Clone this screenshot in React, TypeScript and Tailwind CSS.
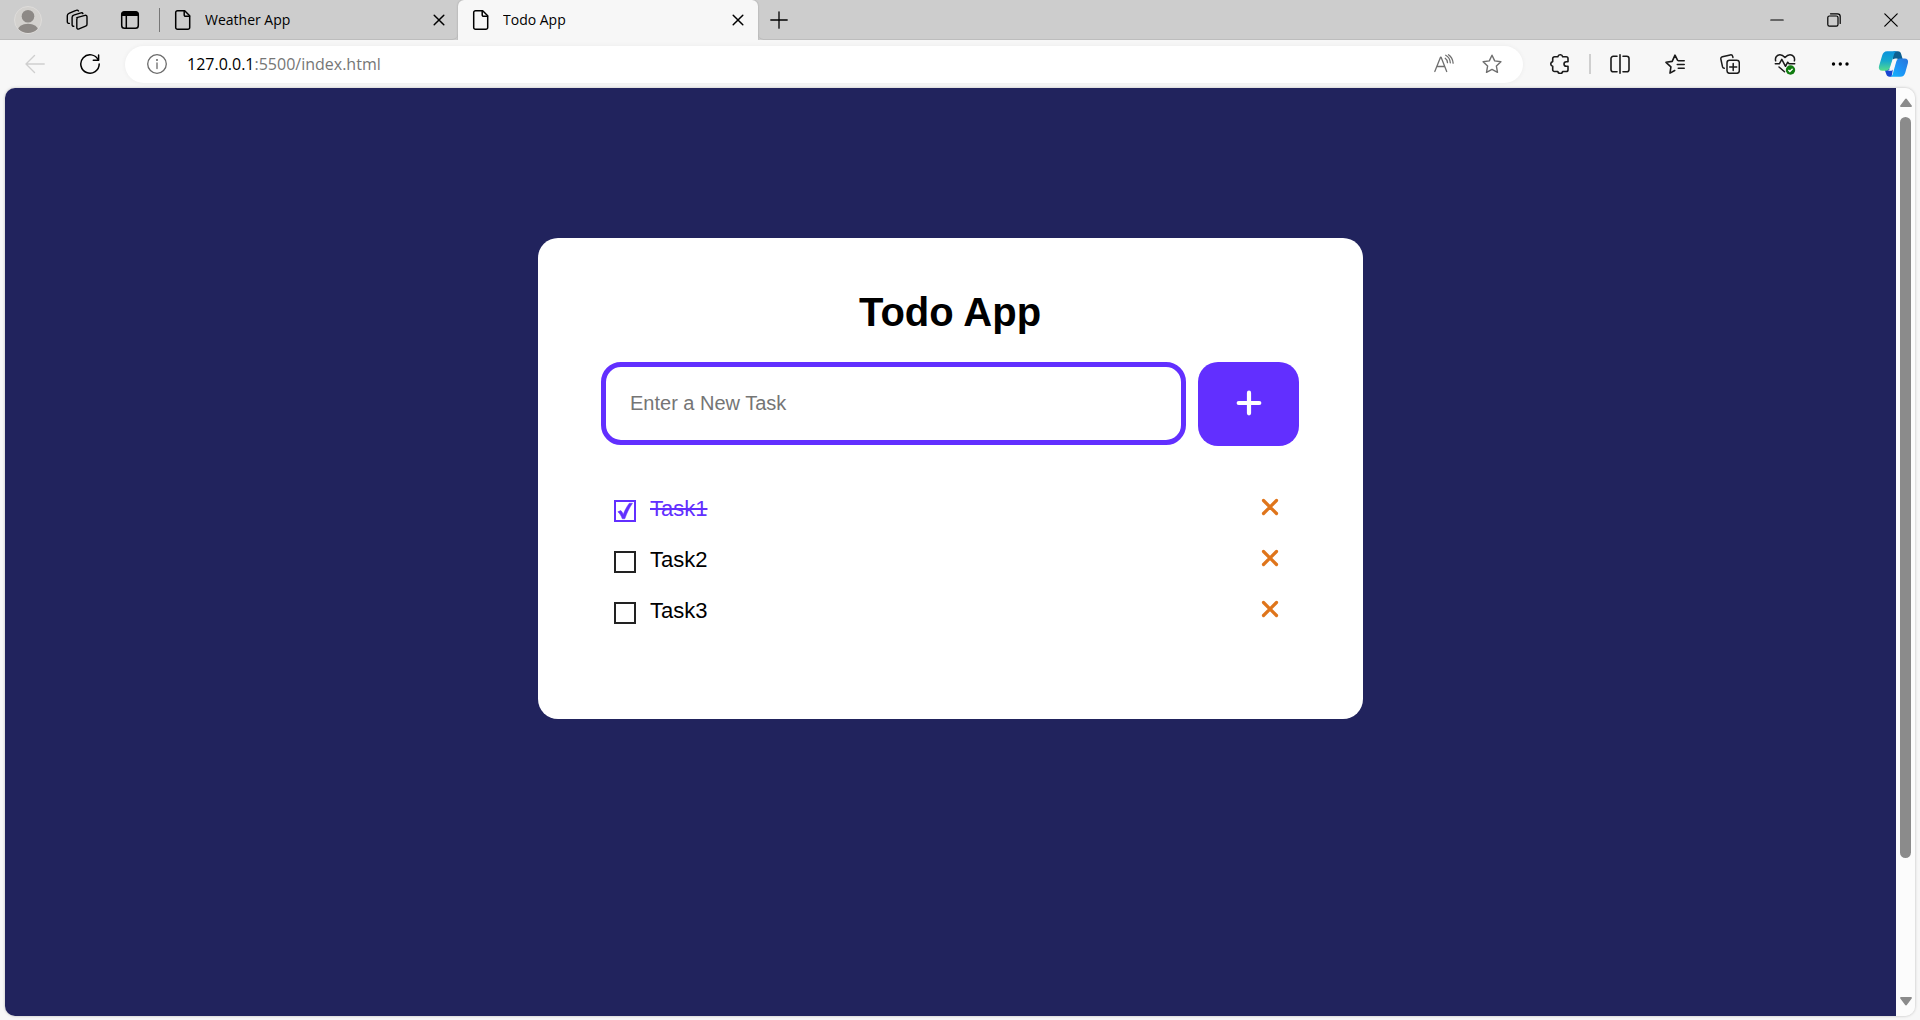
import { useState } from "react";
import type { ReactNode } from "react";

function Stroke({ size, width = 1.5, children, className = "" }: { size: number; width?: number; children: ReactNode; className?: string }) {
  return (
    <svg width={size} height={size} viewBox={`0 0 ${size} ${size}`} fill="none" stroke="currentColor" strokeWidth={width} strokeLinecap="round" strokeLinejoin="round" className={`shrink-0 ${className}`} aria-hidden="true">
      {children}
    </svg>
  );
}

function IconButton({ label, className = "", children }: { label: string; className?: string; children: ReactNode }) {
  return (
    <button type="button" aria-label={label} className={`flex h-10 shrink-0 items-center justify-center ${className}`}>
      {children}
    </button>
  );
}

const FileIcon = () => (
  <Stroke size={20}>
    <path d="M4.500.8h7.200l5 5v11.600a1.800 1.800 0 0 1-1.800 1.800H4.500a1.800 1.800 0 0 1-1.800-1.800V2.600A1.800 1.800 0 0 1 4.500.8Z" />
    <path d="M11.200 1v3.900a1.400 1.400 0 0 0 1.400 1.400h3.900" />
  </Stroke>
);

const CloseIcon = () => (
  <Stroke size={12} width={1.5}>
    <path d="M1.200 1.200l9.600 9.600M10.800 1.200l-9.600 9.600" />
  </Stroke>
);

const STAR = "M10 1.200l2.700 5.700 6.200.8-4.500 4.400 1.100 6.200-5.500-2.900-5.500 2.900 1.100-6.200L1.100 7.700l6.200-.8Z";

function TabStrip() {
  return (
    <div className="flex h-10 bg-[#cdcdcd] text-black">
      <div className="flex shrink-0 items-center border-b border-[#bdbdbd] pl-[3px]">
        <IconButton label="Profile" className="w-[50px]">
          <svg width="28" height="28" viewBox="0 0 28 28" aria-hidden="true">
            <defs>
              <clipPath id="avatar"><circle cx="14" cy="14" r="13" /></clipPath>
            </defs>
            <circle cx="14" cy="14" r="13.500" fill="#d3d1ce" stroke="#dedcda" />
            <g clipPath="url(#avatar)" fill="#8d8986">
              <circle cx="14" cy="10.300" r="6.300" />
              <ellipse cx="14" cy="25" rx="10.500" ry="7.300" />
            </g>
          </svg>
        </IconButton>
        <IconButton label="Workspaces" className="w-[48px]">
          <Stroke size={22} width={1.400}>
            <path d="M10.800 8.600l8.200-2.200c1.200-.3 2 .3 2 1.400v7.400c0 1-.5 1.700-1.400 2l-6.600 2.700c-1.300.5-2.200 0-2.200-1.300v-8.200c0-1 .1-1.500.9-1.800Z" />
            <path d="M7.800 17.300c-1 .1-1.700-.5-1.700-1.500V8.500c0-1.200.5-2 1.600-2.300l7.300-2.300c.9-.3 1.600 0 1.900.7" />
            <path d="M3.300 14.400c-1.200.1-2-.5-2-1.700V6.800c0-1.200.5-2 1.600-2.400l7.100-3c1.100-.5 2-.2 2.400.5" />
          </Stroke>
        </IconButton>
        <IconButton label="Tab actions menu" className="w-[58px]">
          <Stroke size={20}>
            <rect x="1.700" y="1.700" width="16.600" height="16.600" rx="2.800" />
            <path d="M1.500 6V4.300a2.800 2.800 0 0 1 2.800-2.800h11.400a2.800 2.800 0 0 1 2.800 2.800V6Z" fill="currentColor" stroke="none" />
            <path d="M6.300 6v12" />
          </Stroke>
        </IconButton>
        <span className="h-6 w-px bg-[#777]" />
      </div>
      <div role="tablist" aria-label="Open pages" className="flex min-w-0">
        <div className="flex w-[298px] items-center rounded-br-md border-b border-[#bdbdbd] pr-[7px] pl-[13px]">
          <FileIcon />
          <button type="button" role="tab" aria-selected="false" className="ml-3 flex-1 truncate text-left text-[14px] leading-5">Weather App</button>
          <IconButton label="Close Weather App" className="w-6"><CloseIcon /></IconButton>
        </div>
        <div className="flex w-[300px] items-center rounded-t-md bg-[#f7f7f7] pr-2 pl-[13px] shadow-[0_0_2px_#00000040] [clip-path:inset(0_-3px)]">
          <FileIcon />
          <button type="button" role="tab" aria-selected="true" className="ml-3 flex-1 truncate text-left text-[14px] leading-5">Todo App</button>
          <IconButton label="Close Todo App" className="w-6"><CloseIcon /></IconButton>
        </div>
      </div>
      <div className="flex flex-1 items-center justify-between rounded-bl-md border-b border-[#bdbdbd]">
        <IconButton label="New tab" className="w-[42px]">
          <Stroke size={18} width={1.300}><path d="M9 .8v16.400M.8 9h16.400" /></Stroke>
        </IconButton>
        <div className="flex">
          <IconButton label="Minimize" className="w-[57px]">
            <Stroke size={14} width={1.200}><path d="M.8 7h12.400" /></Stroke>
          </IconButton>
          <IconButton label="Restore" className="w-[57px]">
            <Stroke size={14} width={1.200}>
              <rect x=".8" y="3" width="10.200" height="10.200" rx="1.600" />
              <path d="M3.500.8h7a2.700 2.700 0 0 1 2.700 2.700v7" />
            </Stroke>
          </IconButton>
          <IconButton label="Close window" className="w-[58px]">
            <Stroke size={14} width={1.200}><path d="M.8.8l12.400 12.400M13.200.8L.8 13.200" /></Stroke>
          </IconButton>
        </div>
      </div>
    </div>
  );
}

function Toolbar() {
  return (
    <div className="flex h-12 items-center bg-[#f7f7f7] text-[#1a1a1a]">
      <IconButton label="Back" className="w-[70px] text-[#cfcfcf]">
        <Stroke size={20} width={1.400}><path d="M19.200 10H1M9.500 1.500L1 10l8.500 8.500" /></Stroke>
      </IconButton>
      <IconButton label="Refresh" className="w-[40px] text-black">
        <Stroke size={20} width={1.500}>
          <path d="M18.300 6A9.200 9.200 0 1 0 19.200 10" />
          <path d="M18.600 1v5.300h-5.300" />
        </Stroke>
      </IconButton>
      <div className="ml-[15px] flex h-[37px] min-w-0 flex-1 items-center rounded-full bg-white pl-[22px] shadow-[0_0_5px_#0000000d]">
        <Stroke size={20} width={1.300} className="text-[#6b6b6b]">
          <circle cx="10" cy="10" r="9.300" />
          <path d="M10 9v5.500" />
          <circle cx="10" cy="6" r=".4" fill="currentColor" />
        </Stroke>
        <button type="button" aria-label="Address bar, 127.0.0.1:5500/index.html" className="ml-5 flex-1 truncate text-left text-[16px] leading-6 text-[#767676]">
          <span className="text-black">127.0.0.1</span>:5500/index.html
        </button>
        <IconButton label="Read aloud" className="w-[49px] text-[#6f6f6f]">
          <Stroke size={20} width={1.300}>
            <path d="M.8 17.500L6.500 3.200h.6l5.600 14.300M3 12.500h7.600M11.200 4.300c1.500 1 2.300 2.500 2.300 4.400M11.700 1.300c2.700 1.500 4.400 4.300 4.600 7.500M14.500.8c2.500 1.600 4.200 4.600 4.600 8.300" />
          </Stroke>
        </IconButton>
        <IconButton label="Add this page to favorites" className="mr-[7px] w-[48px] text-[#6f6f6f]">
          <Stroke size={20} width={1.400}><path d={STAR} /></Stroke>
        </IconButton>
      </div>
      <IconButton label="Extensions" className="ml-[9px] w-[55px]">
        <Stroke size={20} width={1.600}>
          <path d="M4.500 2.800H7.800a2.500 2.500 0 0 1 4.900 0h3.500A1.800 1.800 0 0 1 18 4.600v3.100h-1.700a2.300 2.300 0 0 0 0 4.600H18v3.400a1.800 1.800 0 0 1-1.800 1.800h-3.500a2.500 2.500 0 0 1-4.900 0H4.500a1.800 1.800 0 0 1-1.800-1.800v-3.400a2.400 2.400 0 0 1 0-4.700V4.600a1.800 1.800 0 0 1 1.800-1.800Z" />
        </Stroke>
      </IconButton>
      <span className="mr-px ml-0.5 h-5 w-0.5 bg-[#cfcfcf]" />
      <IconButton label="Split screen" className="w-[55px]">
        <Stroke size={20} width={1.600}>
          <path d="M7 2.300H3.300A2.300 2.300 0 0 0 1 4.600v10.800a2.300 2.300 0 0 0 2.300 2.300H7M13 2.300h3.700A2.300 2.300 0 0 1 19 4.600v10.800a2.300 2.300 0 0 1-2.300 2.300H13M10 .8v18.400" />
        </Stroke>
      </IconButton>
      <IconButton label="Favorites" className="w-[55px]">
        <Stroke size={20} width={1.600}>
          <path d="M9.700 16.500l-4.700 2.600.9-6.200L1 8.300l6.200-.9L10 1.200l2.500 5M13.300 6.800h5.900M12.300 10.500h6.900M13.300 14.300h5.900" />
        </Stroke>
      </IconButton>
      <IconButton label="Collections" className="w-[55px]">
        <Stroke size={20} width={1.500}>
          <rect x="7" y="6.300" width="12.300" height="13" rx="2.500" />
          <path d="M13.200 9.500v7M9.700 13h7M4.300 14.200c-1 0-1.500-.5-1.800-1.500L.9 5.300c-.3-1.200.3-2.200 1.500-2.500L10.200.9c1.300-.3 2.200.3 2.500 1.500l.2 1" />
        </Stroke>
      </IconButton>
      <IconButton label="Browser essentials" className="w-[55px]">
        <svg width="22" height="22" viewBox="0 0 22 22" fill="none" aria-hidden="true">
          <g stroke="currentColor" strokeWidth="1.500" strokeLinecap="round" strokeLinejoin="round">
            <path d="M1.600 7.800C.8 4.500 3 1.700 6 1.700c2.300 0 3.600 1.200 5 2.800 1.400-1.600 2.700-2.800 5-2.800 3 0 5.200 2.800 4.400 6.100" />
            <path d="M1.300 10.800h4l2.500-4.500 3.700 7 2.200-4.100 1.400 1.600h5.600M5 14l5.500 4.800" />
          </g>
          <circle cx="16.500" cy="17" r="4.700" fill="#107c10" />
          <path d="M14.400 17l1.500 1.500 2.700-2.800" stroke="#fff" strokeWidth="1.300" />
        </svg>
      </IconButton>
      <IconButton label="Settings and more" className="w-[55px] text-black">
        <svg width="18" height="4" viewBox="0 0 18 4" fill="currentColor" aria-hidden="true">
          <circle cx="2.500" cy="2" r="1.700" /><circle cx="9.300" cy="2" r="1.700" /><circle cx="16" cy="2" r="1.700" />
        </svg>
      </IconButton>
      <IconButton label="Copilot" className="w-[53px] pr-px">
        <svg width="31" height="28" viewBox="0 0 32 28" aria-hidden="true">
          <defs>
            <linearGradient id="teal" x1="0" y1="0" x2="0" y2="1">
              <stop offset="0" stopColor="#0a92dc" /><stop offset=".5" stopColor="#17a9cd" /><stop offset="1" stopColor="#55dc8c" />
            </linearGradient>
            <linearGradient id="azure" x1="1" y1="0" x2="0" y2="1">
              <stop offset="0" stopColor="#2b74d8" /><stop offset=".5" stopColor="#1d92f5" /><stop offset="1" stopColor="#13b8fb" />
            </linearGradient>
          </defs>
          <path d="M16 .8h4.500c2 0 2.900.9 3.400 2.800L25.500 9H15Z" fill="#0c5f91" />
          <path d="M6.500 19h9l-1.500 8.200h-2c-1.900 0-2.900-.9-3.500-2.800Z" fill="#1846d2" />
          <path d="M9.500.8H20c-1.800.2-2.700 1.300-3.300 3l-4 12.800c-.9 2.700-2 4.300-4.700 4.300H4.500C1.600 20.900.3 18.900 1 16.200L4.300 5.200C5.100 2.500 6.600.8 9.500.8Z" fill="url(#teal)" />
          <path d="M22.700 8.300h4.700c2.900 0 4.200 1.700 3.500 4.600l-2.700 9.900c-.8 2.800-2.300 4.400-5.200 4.400H12.500c1.600-.2 2.300-1.400 2.800-3.100l3.200-11.500c.9-2.900 1.600-4.300 4.200-4.300Z" fill="url(#azure)" />
          <path d="M20.500 8.300h-2.700c-1.500 0-2.200.9-2.700 2.500l-2 6.200c-.6 1.800-1.400 3.200-3.200 3.900h2.700c2 0 3-.9 3.600-2.900l2-6.300c.5-1.700 1.100-2.800 2.300-3.400Z" fill="#f7f7f7" />
        </svg>
      </IconButton>
    </div>
  );
}

function ScrollRail() {
  return (
    <div aria-hidden="true" className="flex w-[19px] shrink-0 flex-col items-center bg-[#fcfcfc] py-[10px] text-[#8b8b8b]">
      <svg width="12" height="9" viewBox="0 0 12 9" fill="currentColor"><path d="M5 1.200a1.200 1.200 0 0 1 2 0l4.700 6.300c.5.700.1 1.500-.7 1.500H1C.2 9-.2 8.200.3 7.500Z" /></svg>
      <div className="mt-[10px] w-[11px] flex-[742] rounded-full bg-[#8b8b8b]" />
      <div className="flex-[139]" />
      <svg width="12" height="9" viewBox="0 0 12 9" fill="currentColor"><path d="M5 7.800a1.200 1.200 0 0 0 2 0l4.700-6.300C12.200.8 11.800 0 11 0H1C.2 0-.2.8.3 1.500Z" /></svg>
    </div>
  );
}

function TodoCard() {
  const [tasks, setTasks] = useState([
    { id: 1, name: "Task1", done: true },
    { id: 2, name: "Task2", done: false },
    { id: 3, name: "Task3", done: false },
  ]);
  const [draft, setDraft] = useState("");
  const add = () => {
    const name = draft.trim();
    if (!name) return;
    setTasks((list) => [...list, { id: Date.now(), name, done: false }]);
    setDraft("");
  };

  return (
    <section className="mx-auto mt-[150px] w-[825px] max-w-full rounded-[20px] bg-white pt-[51px] pr-16 pb-[83px] pl-[63px] font-['Liberation_Sans',Arial,sans-serif] text-black">
      <h1 className="text-center text-[40px] leading-[46px] font-bold">Todo App</h1>
      <form className="mt-[27px] flex items-start gap-3" onSubmit={(e) => { e.preventDefault(); add(); }}>
        <input
          type="text"
          aria-label="New task"
          placeholder="Enter a New Task"
          value={draft}
          onChange={(e) => setDraft(e.target.value)}
          className="h-[83px] min-w-0 flex-1 rounded-[20px] border-5 border-[#622fff] px-6 text-[20px] outline-none placeholder:text-[#757575]"
        />
        <button type="submit" aria-label="Add task" className="flex h-[84px] w-[101px] items-center justify-center rounded-[20px] bg-[#622fff] pb-0.5 text-white">
          <Stroke size={26} width={4.200}><path d="M13 2.700v20.600M2.700 13h20.600" /></Stroke>
        </button>
      </form>
      <ul className="mt-[37px]">
        {tasks.map((task) => (
          <li key={task.id} className="flex h-[51px] items-center pl-[13px]">
            <span className="relative mt-[5px] flex">
              <input
                id={`task-${task.id}`}
                type="checkbox"
                checked={task.done}
                onChange={() => setTasks((list) => list.map((t) => (t.id === task.id ? { ...t, done: !t.done } : t)))}
                className="size-[22px] appearance-none border-2 border-[#222] checked:border-[#622fff]"
              />
              {task.done && (
                <svg width="22" height="22" viewBox="0 0 22 22" className="pointer-events-none absolute inset-0 text-[#622fff]" aria-hidden="true">
                  <path d="M3.800 11.800l3-1.300c1.200 1.100 1.900 2.300 2.400 4C11 9.800 13 6.200 15.300 3.200h3.200C15.300 7.800 12.800 13 10.800 18.800H8.300C7.300 16 5.900 13.500 3.800 11.800Z" fill="currentColor" stroke="currentColor" strokeWidth=".5" />
                </svg>
              )}
            </span>
            <label htmlFor={`task-${task.id}`} className={task.done ? "ml-[14px] text-[22px] leading-[26px] text-[#622fff] line-through" : "ml-[14px] text-[22px] leading-[26px]"}>
              {task.name}
            </label>
            <button
              type="button"
              aria-label={`Delete ${task.name}`}
              onClick={() => setTasks((list) => list.filter((t) => t.id !== task.id))}
              className="ml-auto flex h-10 w-[58px] items-center justify-center pb-1 text-[#df751b]"
            >
              <Stroke size={18} width={3.200}><path d="M2.500 2.500l13 13M15.500 2.500l-13 13" /></Stroke>
            </button>
          </li>
        ))}
      </ul>
    </section>
  );
}

export default function App() {
  return (
    <div className="flex min-h-screen flex-col bg-[#f7f7f7] font-['Open_Sans','Noto_Sans',sans-serif]">
      <header>
        <TabStrip />
        <Toolbar />
      </header>
      <div className="flex flex-1 px-[5px] pb-1">
        <div className="flex flex-1 overflow-hidden rounded-[10px] shadow-[0_0_3px_#00000040]">
          <main className="min-w-0 flex-1 bg-[#21235d]">
            <TodoCard />
          </main>
          <ScrollRail />
        </div>
      </div>
    </div>
  );
}
